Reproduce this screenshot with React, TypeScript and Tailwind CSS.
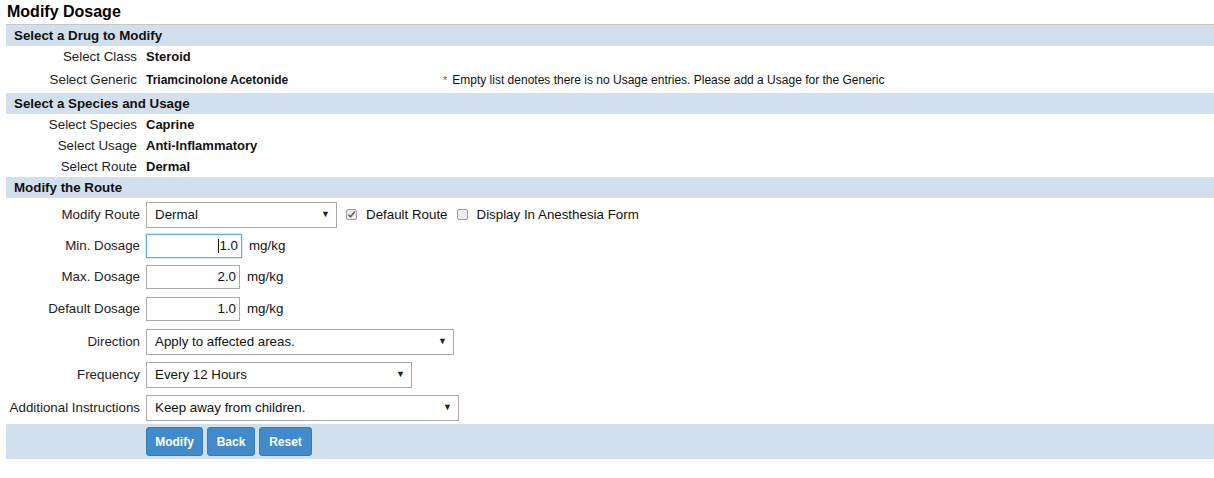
import React from "react";

function Bar({ children }: { children?: React.ReactNode }) {
  return (
    <div className="h-[21px] bg-[#d1e0ec] pl-[8px] flex items-center text-[13.33px] font-bold text-[#111]">
      {children}
    </div>
  );
}

function InfoRow({ label, value, h = "h-[21px]", small, note }: { label: string; value: string; h?: string; small?: boolean; note?: boolean }) {
  return (
    <div className={`${h} flex items-center`}>
      <div className="w-[131px] text-right text-[13.33px] text-[#222]">{label}</div>
      <div className={`ml-[9px] font-bold text-[#111] ${small ? "text-[12px] w-[297px]" : "text-[13px]"}`}>{value}</div>
      {note && (
        <div className="flex items-center text-[12px] text-[#111]">
          <span className="text-[#e0303a] mr-[5px] text-[11px]">*</span>
          Empty list denotes there is no Usage entries. Please add a Usage for the Generic
        </div>
      )}
    </div>
  );
}

function Select({ value, w }: { value: string; w: string }) {
  return (
    <div className={`${w} h-[26px] border border-[#aaa] bg-white flex items-center justify-between pl-[8px] pr-[6px] text-[13.33px] text-[#111]`}>
      <span>{value}</span>
      <span className="text-[9px] text-[#222]">▼</span>
    </div>
  );
}

function Field({ label, h, children }: { label: string; h: string; children: React.ReactNode }) {
  return (
    <div className={`${h} flex items-center`}>
      <div className="w-[134px] text-right text-[13.33px] text-[#222] whitespace-nowrap">{label}</div>
      <div className="ml-[6px] flex items-center">{children}</div>
    </div>
  );
}

function Dose({ value, focused, w }: { value: string; focused?: boolean; w: string }) {
  return (
    <div className="flex items-center">
      <div
        className={`${w} h-[24px] bg-white flex items-center justify-end pr-[3px] text-[13.33px] text-[#111] ${
          focused ? "border border-[#66a6e8] shadow-[0_0_2px_#8fc1f0]" : "border border-[#aaa]"
        }`}
      >
        {focused && <span className="w-px h-[14px] bg-[#111]" />}
        <span>{value}</span>
      </div>
      <span className="ml-[7px] text-[13.33px] text-[#111]">mg/kg</span>
    </div>
  );
}

function Check({ checked }: { checked?: boolean }) {
  return (
    <span className="w-[11px] h-[11px] border border-[#999] rounded-[2px] bg-[#eee] flex items-center justify-center">
      {checked && (
        <svg viewBox="0 0 10 10" className="w-[9px] h-[9px]">
          <path d="M1.5 5.2 L4 7.6 L8.6 1.8" fill="none" stroke="#666" strokeWidth="1.8" />
        </svg>
      )}
    </span>
  );
}

function Btn({ children, w }: { children: React.ReactNode; w: string }) {
  return (
    <button className={`${w} h-[29px] rounded-[3px] bg-[#428bca] border border-[#357ebd] text-white text-[12px] font-bold`}>
      {children}
    </button>
  );
}

export default function App() {
  return (
    <div className="w-[1214px] h-[478px] bg-white font-['Liberation_Sans',Arial,sans-serif]">
      <div className="h-[24px] pl-[7px] flex items-center text-[16px] font-bold text-black">Modify Dosage</div>
      <div className="ml-[6px] border-t border-[#c4c8cc]">
        <Bar>Select a Drug to Modify</Bar>
        <InfoRow label="Select Class" value="Steroid" />
        <InfoRow label="Select Generic" value="Triamcinolone Acetonide" h="h-[26px]" small note />
        <Bar>Select a Species and Usage</Bar>
        <InfoRow label="Select Species" value="Caprine" />
        <InfoRow label="Select Usage" value="Anti-Inflammatory" />
        <InfoRow label="Select Route" value="Dermal" />
        <Bar>Modify the Route</Bar>
        <Field label="Modify Route" h="h-[33px]">
          <Select value="Dermal" w="w-[191px]" />
          <div className="ml-[9px] flex items-center gap-[9px] text-[13.33px] text-[#111]">
            <Check checked />
            <span>Default Route</span>
            <Check />
            <span>Display In Anesthesia Form</span>
          </div>
        </Field>
        <Field label="Min. Dosage" h="h-[30px]">
          <Dose value="1.0" focused w="w-[96px]" />
        </Field>
        <Field label="Max. Dosage" h="h-[32px]">
          <Dose value="2.0" w="w-[94px]" />
        </Field>
        <Field label="Default Dosage" h="h-[32px]">
          <Dose value="1.0" w="w-[94px]" />
        </Field>
        <Field label="Direction" h="h-[33px]">
          <Select value="Apply to affected areas." w="w-[308px]" />
        </Field>
        <Field label="Frequency" h="h-[33px]">
          <Select value="Every 12 Hours" w="w-[266px]" />
        </Field>
        <Field label="Additional Instructions" h="h-[33px]">
          <Select value="Keep away from children." w="w-[313px]" />
        </Field>
        <div className="h-[35px] bg-[#d1e0ec] pl-[140px] flex items-center gap-[4px]">
          <Btn w="w-[57px]">Modify</Btn>
          <Btn w="w-[48px]">Back</Btn>
          <Btn w="w-[53px]">Reset</Btn>
        </div>
      </div>
    </div>
  );
}
